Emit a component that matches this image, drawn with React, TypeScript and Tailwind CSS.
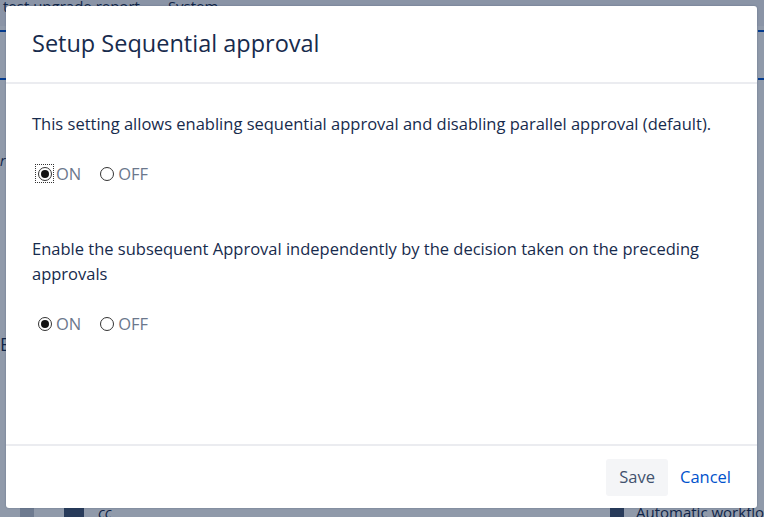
import React from "react";

function Radio({ checked, focused }: { checked?: boolean; focused?: boolean }) {
  return (
    <span
      className={
        "inline-flex h-[19px] w-[19px] items-center justify-center " +
        (focused ? "outline outline-1 outline-dotted outline-[#333] -outline-offset-1" : "")
      }
    >
      <span className="flex h-[14px] w-[14px] items-center justify-center rounded-full border border-[#333] bg-white">
        {checked && <span className="h-[8px] w-[8px] rounded-full bg-[#111]" />}
      </span>
    </span>
  );
}

function Toggle({ focused }: { focused?: boolean }) {
  return (
    <div className="ml-[3px] flex items-center text-[16.5px] text-[#6b778c]">
      <label className="flex items-center gap-[2px]">
        <Radio checked focused={focused} />
        <span>ON</span>
      </label>
      <label className="ml-[16px] flex items-center gap-[2px]">
        <Radio />
        <span>OFF</span>
      </label>
    </div>
  );
}

export default function App() {
  return (
    <div className="relative h-[517px] w-[764px] overflow-hidden bg-white font-['Open_Sans','Liberation_Sans',sans-serif]">
      {/* page behind the dialog */}
      <div className="flex h-full flex-col text-[#172b4d]">
        <div className="flex h-[26px] items-start gap-[28px] bg-[#f4f5f7] pl-[3px] text-[15px] leading-[12px]">
          <span>test upgrade report</span>
          <span>System</span>
        </div>
        <div className="flex flex-1">
          <div className="flex w-[6px] flex-col">
            <div className="mt-[4px] h-[2px] bg-[#0052cc]" />
            <div className="mt-[46px] h-[2px] bg-[#0052cc]" />
            <div className="mt-[70px] text-[14px] italic">r</div>
            <div className="mt-[160px] text-[18px]">E</div>
          </div>
          <div className="flex-1" />
          <div className="flex w-[6px] flex-col">
            <div className="mt-[4px] h-[2px] bg-[#0052cc]" />
            <div className="mt-[46px] h-[2px] bg-[#0052cc]" />
          </div>
        </div>
        <div className="flex h-[14px] items-start">
          <div className="ml-[20px] h-full w-[14px] bg-[#c1c7d0]" />
          <div className="ml-[30px] h-full w-[20px] bg-[#42526e]" />
          <span className="ml-[14px] text-[15px] italic leading-[18px]">cc</span>
          <div className="ml-auto h-full w-[14px] bg-[#42526e]" />
          <span className="ml-[12px] text-[15px] leading-[18px]">Automatic workflo</span>
        </div>
      </div>

      {/* overlay */}
      <div className="absolute inset-0 bg-[#091e42]/45" />

      {/* dialog */}
      <div className="absolute left-[6px] top-[6px] flex h-[502px] w-[751px] flex-col rounded-[3px] bg-white shadow-[0_0_2px_rgba(9,30,66,0.3)]">
        <div className="flex h-[78px] items-center border-b-2 border-[#ebecf0] px-[26px]">
          <h1 className="text-[23.5px] leading-none text-[#172b4d]">Setup Sequential approval</h1>
        </div>

        <div className="flex-1 px-[26px] pt-[27px] text-[16.5px] leading-[25px] text-[#172b4d]">
          <p>This setting allows enabling sequential approval and disabling parallel approval (default).</p>
          <div className="mt-[25px]">
            <Toggle focused />
          </div>
          <p className="mt-[50px]">
            Enable the subsequent Approval independently by the decision taken on the preceding approvals
          </p>
          <div className="mt-[25px]">
            <Toggle />
          </div>
        </div>

        <div className="flex h-[64px] items-start justify-end gap-[12px] border-t-2 border-[#ebecf0] px-[26px] pt-[13px]">
          <button className="h-[37px] rounded-[3px] bg-[#f4f5f7] px-[13px] text-[16.5px] text-[#42526e]">Save</button>
          <button className="h-[37px] text-[16.5px] text-[#0052cc]">Cancel</button>
        </div>
      </div>
    </div>
  );
}
